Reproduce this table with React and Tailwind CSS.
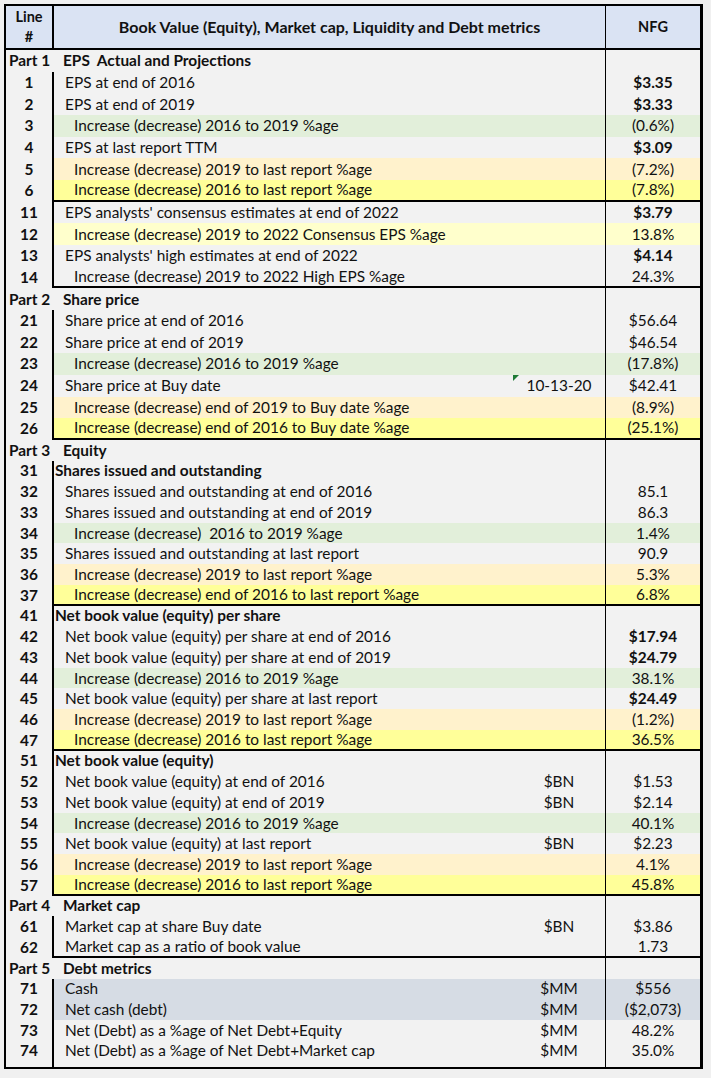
const ROWS = [
  { part: 'Part 1', title: 'EPS  Actual and Projections' },
  { n: 1, t: 'EPS at end of 2016', v: '$3.35', b: true },
  { n: 2, t: 'EPS at end of 2019', v: '$3.33', b: true },
  { n: 3, t: 'Increase (decrease) 2016 to 2019 %age', v: '(0.6%)', i: true, bg: 'green' },
  { n: 4, t: 'EPS at last report TTM', v: '$3.09', b: true },
  { n: 5, t: 'Increase (decrease) 2019 to last report %age', v: '(7.2%)', i: true, bg: 'orange' },
  { n: 6, t: 'Increase (decrease) 2016 to last report %age', v: '(7.8%)', i: true, bg: 'yellow', end: true },
  { n: 11, t: "EPS analysts' consensus estimates at end of 2022", v: '$3.79', b: true },
  { n: 12, t: 'Increase (decrease) 2019 to 2022 Consensus EPS %age', v: '13.8%', i: true, bg: 'pale' },
  { n: 13, t: "EPS analysts' high estimates at end of 2022", v: '$4.14', b: true },
  { n: 14, t: 'Increase (decrease) 2019 to 2022 High EPS %age', v: '24.3%', i: true, end: true },
  { part: 'Part 2', title: 'Share price' },
  { n: 21, t: 'Share price at end of 2016', v: '$56.64' },
  { n: 22, t: 'Share price at end of 2019', v: '$46.54' },
  { n: 23, t: 'Increase (decrease) 2016 to 2019 %age', v: '(17.8%)', i: true, bg: 'green' },
  { n: 24, t: 'Share price at Buy date', u: '10-13-20', v: '$42.41', flag: true },
  { n: 25, t: 'Increase (decrease) end of 2019 to Buy date %age', v: '(8.9%)', i: true, bg: 'orange' },
  { n: 26, t: 'Increase (decrease) end of 2016 to Buy date %age', v: '(25.1%)', i: true, bg: 'yellow', end: true },
  { part: 'Part 3', title: 'Equity' },
  { n: 31, t: 'Shares issued and outstanding', sub: true },
  { n: 32, t: 'Shares issued and outstanding at end of 2016', v: '85.1' },
  { n: 33, t: 'Shares issued and outstanding at end of 2019', v: '86.3' },
  { n: 34, t: 'Increase (decrease)  2016 to 2019 %age', v: '1.4%', i: true, bg: 'green' },
  { n: 35, t: 'Shares issued and outstanding at last report', v: '90.9' },
  { n: 36, t: 'Increase (decrease) 2019 to last report %age', v: '5.3%', i: true, bg: 'orange' },
  { n: 37, t: 'Increase (decrease) end of 2016 to last report %age', v: '6.8%', i: true, bg: 'yellow', end: true },
  { n: 41, t: 'Net book value (equity) per share', sub: true },
  { n: 42, t: 'Net book value (equity) per share at end of 2016', v: '$17.94', b: true },
  { n: 43, t: 'Net book value (equity) per share at end of 2019', v: '$24.79', b: true },
  { n: 44, t: 'Increase (decrease) 2016 to 2019 %age', v: '38.1%', i: true, bg: 'green' },
  { n: 45, t: 'Net book value (equity) per share at last report', v: '$24.49', b: true },
  { n: 46, t: 'Increase (decrease) 2019 to last report %age', v: '(1.2%)', i: true, bg: 'orange' },
  { n: 47, t: 'Increase (decrease) 2016 to last report %age', v: '36.5%', i: true, bg: 'yellow', end: true },
  { n: 51, t: 'Net book value (equity)', sub: true },
  { n: 52, t: 'Net book value (equity) at end of 2016', u: '$BN', v: '$1.53' },
  { n: 53, t: 'Net book value (equity) at end of 2019', u: '$BN', v: '$2.14' },
  { n: 54, t: 'Increase (decrease) 2016 to 2019 %age', v: '40.1%', i: true, bg: 'green' },
  { n: 55, t: 'Net book value (equity) at last report', u: '$BN', v: '$2.23' },
  { n: 56, t: 'Increase (decrease) 2019 to last report %age', v: '4.1%', i: true, bg: 'orange' },
  { n: 57, t: 'Increase (decrease) 2016 to last report %age', v: '45.8%', i: true, bg: 'yellow', end: true },
  { part: 'Part 4', title: 'Market cap' },
  { n: 61, t: 'Market cap at share Buy date', u: '$BN', v: '$3.86' },
  { n: 62, t: 'Market cap as a ratio of book value', v: '1.73', end: true },
  { part: 'Part 5', title: 'Debt metrics' },
  { n: 71, t: 'Cash', u: '$MM', v: '$556', bg: 'blue' },
  { n: 72, t: 'Net cash (debt)', u: '$MM', v: '($2,073)', bg: 'blue' },
  { n: 73, t: 'Net (Debt) as a %age of Net Debt+Equity', u: '$MM', v: '48.2%' },
  { n: 74, t: 'Net (Debt) as a %age of Net Debt+Market cap', u: '$MM', v: '35.0%' },
]

const BG = {
  green: 'bg-[#e2efda]',
  orange: 'bg-[#fff2cc]',
  yellow: 'bg-[#ffff99]',
  pale: 'bg-[#ffffcc]',
  blue: 'bg-[#d6dce4]',
}

function PartRow({ row, h }) {
  return (
    <div className={`flex ${h}`}>
      <div className="w-[48px] shrink-0 flex items-center pl-[3px] font-bold whitespace-nowrap">{row.part}</div>
      <div className="flex-1 flex items-center pl-[9px] font-bold whitespace-pre">{row.title}</div>
      <div className="w-[95px] shrink-0 border-l border-black" />
    </div>
  )
}

function DataRow({ row, h }) {
  const pad = row.sub ? 'pl-[1px] font-bold' : row.i ? 'pl-[20px]' : 'pl-[11px]'
  return (
    <div className={`flex ${h}`}>
      <div className="w-[46px] shrink-0 flex items-center justify-center font-bold">{row.n}</div>
      <div className={`flex-1 flex border-l-2 border-black ${row.end ? 'border-b-2' : ''} ${row.bg ? BG[row.bg] : ''}`}>
        <div className={`flex-1 flex items-center whitespace-pre ${pad}`}>{row.t}</div>
        <div className="relative w-[92px] shrink-0 flex items-center justify-center">
          {row.flag && (
            <span className="absolute left-0 top-0 w-0 h-0 border-t-[6px] border-r-[6px] border-t-[#1e7b34] border-r-transparent" />
          )}
          {row.u}
        </div>
        <div className={`w-[95px] shrink-0 border-l border-black flex items-center justify-center ${row.b ? 'font-bold' : ''}`}>
          {row.v}
        </div>
      </div>
    </div>
  )
}

export default function App() {
  return (
    <div className="min-h-screen bg-[#f0f0f0] pt-[4px] pl-[4px] text-[#111] text-[15.4px]" style={{ fontFamily: 'Lato, "Noto Sans", sans-serif' }}>
      <div className="w-[699px] border-l-2 border-t-2 border-r-[3px] border-b-2 border-black bg-[#f2f2f2]">
        <div className="flex h-[44px] border-b-2 border-black bg-[#dae3f3] font-bold text-[14.5px]">
          <div className="w-[48px] shrink-0 border-r-2 border-black flex flex-col items-center justify-center leading-[20px]">
            <span>Line</span>
            <span>#</span>
          </div>
          <div className="flex-1 flex items-center justify-center text-[16px]">Book Value (Equity), Market cap, Liquidity and Debt metrics</div>
          <div className="w-[95px] shrink-0 border-l border-black flex items-center justify-center">NFG</div>
        </div>

        {ROWS.map((row, idx) => {
          const h = idx < 18 ? 'h-[21.67px]' : 'h-[20.73px]'
          return row.part ? <PartRow key={row.part} row={row} h={h} /> : <DataRow key={row.n} row={row} h={h} />
        })}

        <div className="flex h-[6px]">
          <div className="w-[46px] shrink-0" />
          <div className="flex-1 border-l-2 border-black" />
          <div className="w-[95px] shrink-0 border-l border-black" />
        </div>
      </div>
    </div>
  )
}
